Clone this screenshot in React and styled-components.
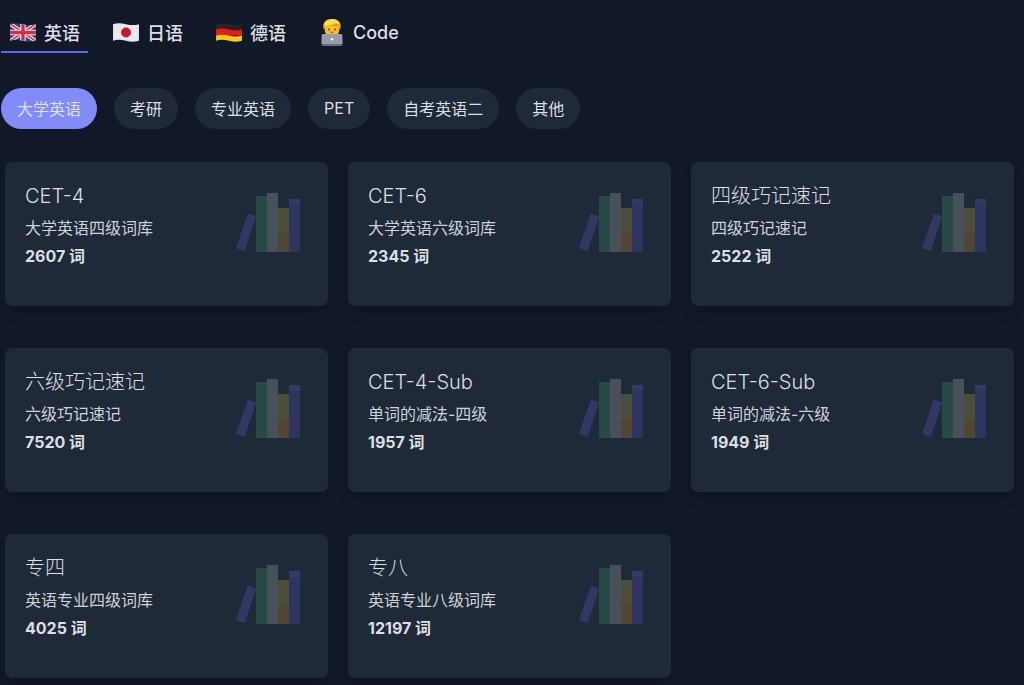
import React, { useState } from 'react';
import styled, { createGlobalStyle } from 'styled-components';

const GlobalStyle = createGlobalStyle`
  * {
    box-sizing: border-box;
  }
  body {
    margin: 0;
    background: #111827;
    color: #dcdfe4;
    font-family: Inter, 'Noto Sans CJK SC', sans-serif;
  }
  button {
    border: none;
    background: none;
    color: inherit;
    font-family: inherit;
    cursor: pointer;
  }
`;

const Page = styled.main`
  padding: 12px 10px 7px 1px;
`;

const TabList = styled.nav`
  display: flex;
  gap: 16px;
`;

const Tab = styled.button`
  display: flex;
  align-items: center;
  gap: 7px;
  height: 41px;
  padding: 2px 8px 1px;
  border-bottom: 2px solid ${(props) => (props.$active ? '#6366f1' : 'transparent')};
  font-size: 18px;
  font-weight: 500;
`;

const TabIcon = styled.svg`
  width: 28px;
  height: 29px;
  flex: none;
`;

const TagList = styled.div`
  display: flex;
  flex-wrap: wrap;
  gap: 17px;
  margin-top: 35px;
`;

const Tag = styled.button`
  height: 41px;
  padding: 0 16px 2px;
  border-radius: 21px;
  background: ${(props) => (props.$active ? '#818cf8' : '#1f2937')};
  font-size: 16px;
`;

const CardGrid = styled.div`
  display: grid;
  grid-template-columns: repeat(3, 1fr);
  gap: 42px 20px;
  margin: 33px 0 0 4px;
`;

const Card = styled.button`
  display: flex;
  align-items: flex-start;
  justify-content: space-between;
  min-height: 144px;
  padding: 20px;
  border-radius: 7px;
  background: #1f2937;
  box-shadow: 0 10px 15px -3px rgba(0, 0, 0, 0.1), 0 4px 6px -4px rgba(0, 0, 0, 0.1);
  text-align: left;
`;

const CardBody = styled.div`
  min-width: 0;
`;

const CardTitle = styled.h2`
  margin: 0;
  font-size: 20px;
  font-weight: 300;
  line-height: 28px;
`;

const CardText = styled.p`
  margin: 6px 0 0;
  color: #ced2d8;
  font-size: 16px;
  font-weight: 400;
  line-height: 24px;
`;

const CardCount = styled.p`
  margin: 4px 0 0;
  font-size: 16px;
  font-weight: 700;
  line-height: 24px;
`;

const CardIcon = styled.svg`
  width: 64px;
  height: 64px;
  flex: none;
  margin: 8px 8px 0 0;
  opacity: 0.3;
`;

const BritishFlag = () => (
  <TabIcon viewBox="0 0 27 28" aria-hidden="true">
    <clipPath id="gb">
      <path d="M1 6c4-1.500 8-1 12.500 0s8 1.200 12.500 0v16c-4.500 1.200-8 1-12.500 0s-8.500-1.500-12.500 0z" />
    </clipPath>
    <g clipPath="url(#gb)">
      <path fill="#2b4684" d="M0 0h27v28H0z" />
      <path stroke="#e4e4ea" strokeWidth="3.800" d="M0 5l27 18M27 5L0 23" />
      <path stroke="#d0364a" strokeWidth="1.600" d="M0 5l27 18M27 5L0 23" />
      <path stroke="#e4e4ea" strokeWidth="5.400" d="M13.500 3v22M0 14h27" />
      <path stroke="#cf2f45" strokeWidth="3.200" d="M13.500 3v22M0 14h27" />
    </g>
  </TabIcon>
);

const JapaneseFlag = () => (
  <TabIcon viewBox="0 0 27 28" aria-hidden="true">
    <path fill="#e9e9ea" d="M1 6c4-1.500 8-1 12.500 0s8 1.200 12.500 0v16c-4.500 1.200-8 1-12.500 0s-8.500-1.500-12.500 0z" />
    <circle cx="13.500" cy="14" r="4.800" fill="#c41a2e" />
  </TabIcon>
);

const GermanFlag = () => (
  <TabIcon viewBox="0 0 27 28" aria-hidden="true">
    <path fill="#2a2220" d="M1 6c4-1.500 8-1 12.500 0s8 1.200 12.500 0v6H1z" />
    <path fill="#e01f17" d="M1 11c4-1.500 8-1 12.500 0s8 1.200 12.500 0v6H1z" />
    <path fill="#fbc91b" d="M1 17c4-1.500 8-1 12.500 0s8 1.200 12.500 0v5c-4.500 1.200-8 1-12.500 0s-8.500-1.500-12.500 0z" />
  </TabIcon>
);

const Technologist = () => (
  <TabIcon viewBox="0 0 27 28" aria-hidden="true">
    <path fill="#3b3a8c" d="M3 27v-5c0-3 4-5 10.500-5S24 19 24 22v5z" />
    <path fill="#f7be2a" d="M6.500 7h14v5c0 3-3 5.500-7 5.500s-7-2.500-7-5.500z" />
    <path fill="#f0a61f" d="M5.500 11C3.500 4 8 1 13.500 1S23.500 4 21.500 11l-1.500-1c0-2-1-3-2-3.500-3 1.500-7 1.500-10 1.500-.5.500-1 1-1 2z" />
    <path fill="#ffd95a" d="M6 8c0-4 3.500-7 8-7 3.500 0 6 2 7 5-2.500-1-5-1-7 0-3 1.500-5.500 1-8 2z" />
    <circle cx="10.500" cy="11" r="0.900" fill="#5c3b15" />
    <circle cx="16.500" cy="11" r="0.900" fill="#5c3b15" />
    <path fill="none" stroke="#8b5a1c" strokeWidth="0.800" d="M11.500 13.500q2 1 4 0" />
    <rect x="3.500" y="15.500" width="20" height="10" rx="1" fill="#979ca8" />
    <path fill="#6f7480" d="M5 25.500h17v1.500H5z" />
    <circle cx="13.500" cy="20.500" r="1.200" fill="#f3f4f6" />
  </TabIcon>
);

const Books = () => (
  <CardIcon viewBox="0 0 64 64" aria-hidden="true">
    <path fill="#6158c9" d="M11.500 24.500q.4-1 1.400-.7l6.300 2.400q1 .4.700 1.400L9 60q-.4 1-1.400.7L1 58.400q-1-.4-.7-1.400z" />
    <path fill="#43946a" d="M20 6h11v56H20z" />
    <path fill="#a7a9ac" d="M31 3h11v59H31z" />
    <path fill="#b5a048" d="M42 18h11v25H42z" />
    <path fill="#c08a2a" d="M42 43h11v19H42z" />
    <path fill="#6a60cc" d="M53 9h11v6H53z" />
    <path fill="#554cc0" d="M53 15h11v47H53z" />
  </CardIcon>
);

const languages = [
  { name: '英语', Icon: BritishFlag },
  { name: '日语', Icon: JapaneseFlag },
  { name: '德语', Icon: GermanFlag },
  { name: 'Code', Icon: Technologist },
];

const tags = ['大学英语', '考研', '专业英语', 'PET', '自考英语二', '其他'];

const dictionaries = [
  { name: 'CET-4', description: '大学英语四级词库', length: 2607 },
  { name: 'CET-6', description: '大学英语六级词库', length: 2345 },
  { name: '四级巧记速记', description: '四级巧记速记', length: 2522 },
  { name: '六级巧记速记', description: '六级巧记速记', length: 7520 },
  { name: 'CET-4-Sub', description: '单词的减法-四级', length: 1957 },
  { name: 'CET-6-Sub', description: '单词的减法-六级', length: 1949 },
  { name: '专四', description: '英语专业四级词库', length: 4025 },
  { name: '专八', description: '英语专业八级词库', length: 12197 },
];

const App = () => {
  const [language, setLanguage] = useState('英语');
  const [tag, setTag] = useState('大学英语');

  return (
    <>
      <GlobalStyle />
      <Page>
        <TabList>
          {languages.map(({ name, Icon }) => (
            <Tab key={name} $active={name === language} onClick={() => setLanguage(name)}>
              <Icon />
              {name}
            </Tab>
          ))}
        </TabList>
        <TagList>
          {tags.map((name) => (
            <Tag key={name} $active={name === tag} onClick={() => setTag(name)}>
              {name}
            </Tag>
          ))}
        </TagList>
        <CardGrid>
          {dictionaries.map((dict) => (
            <Card key={dict.name}>
              <CardBody>
                <CardTitle>{dict.name}</CardTitle>
                <CardText>{dict.description}</CardText>
                <CardCount>{dict.length} 词</CardCount>
              </CardBody>
              <Books />
            </Card>
          ))}
        </CardGrid>
      </Page>
    </>
  );
};

export default App;
